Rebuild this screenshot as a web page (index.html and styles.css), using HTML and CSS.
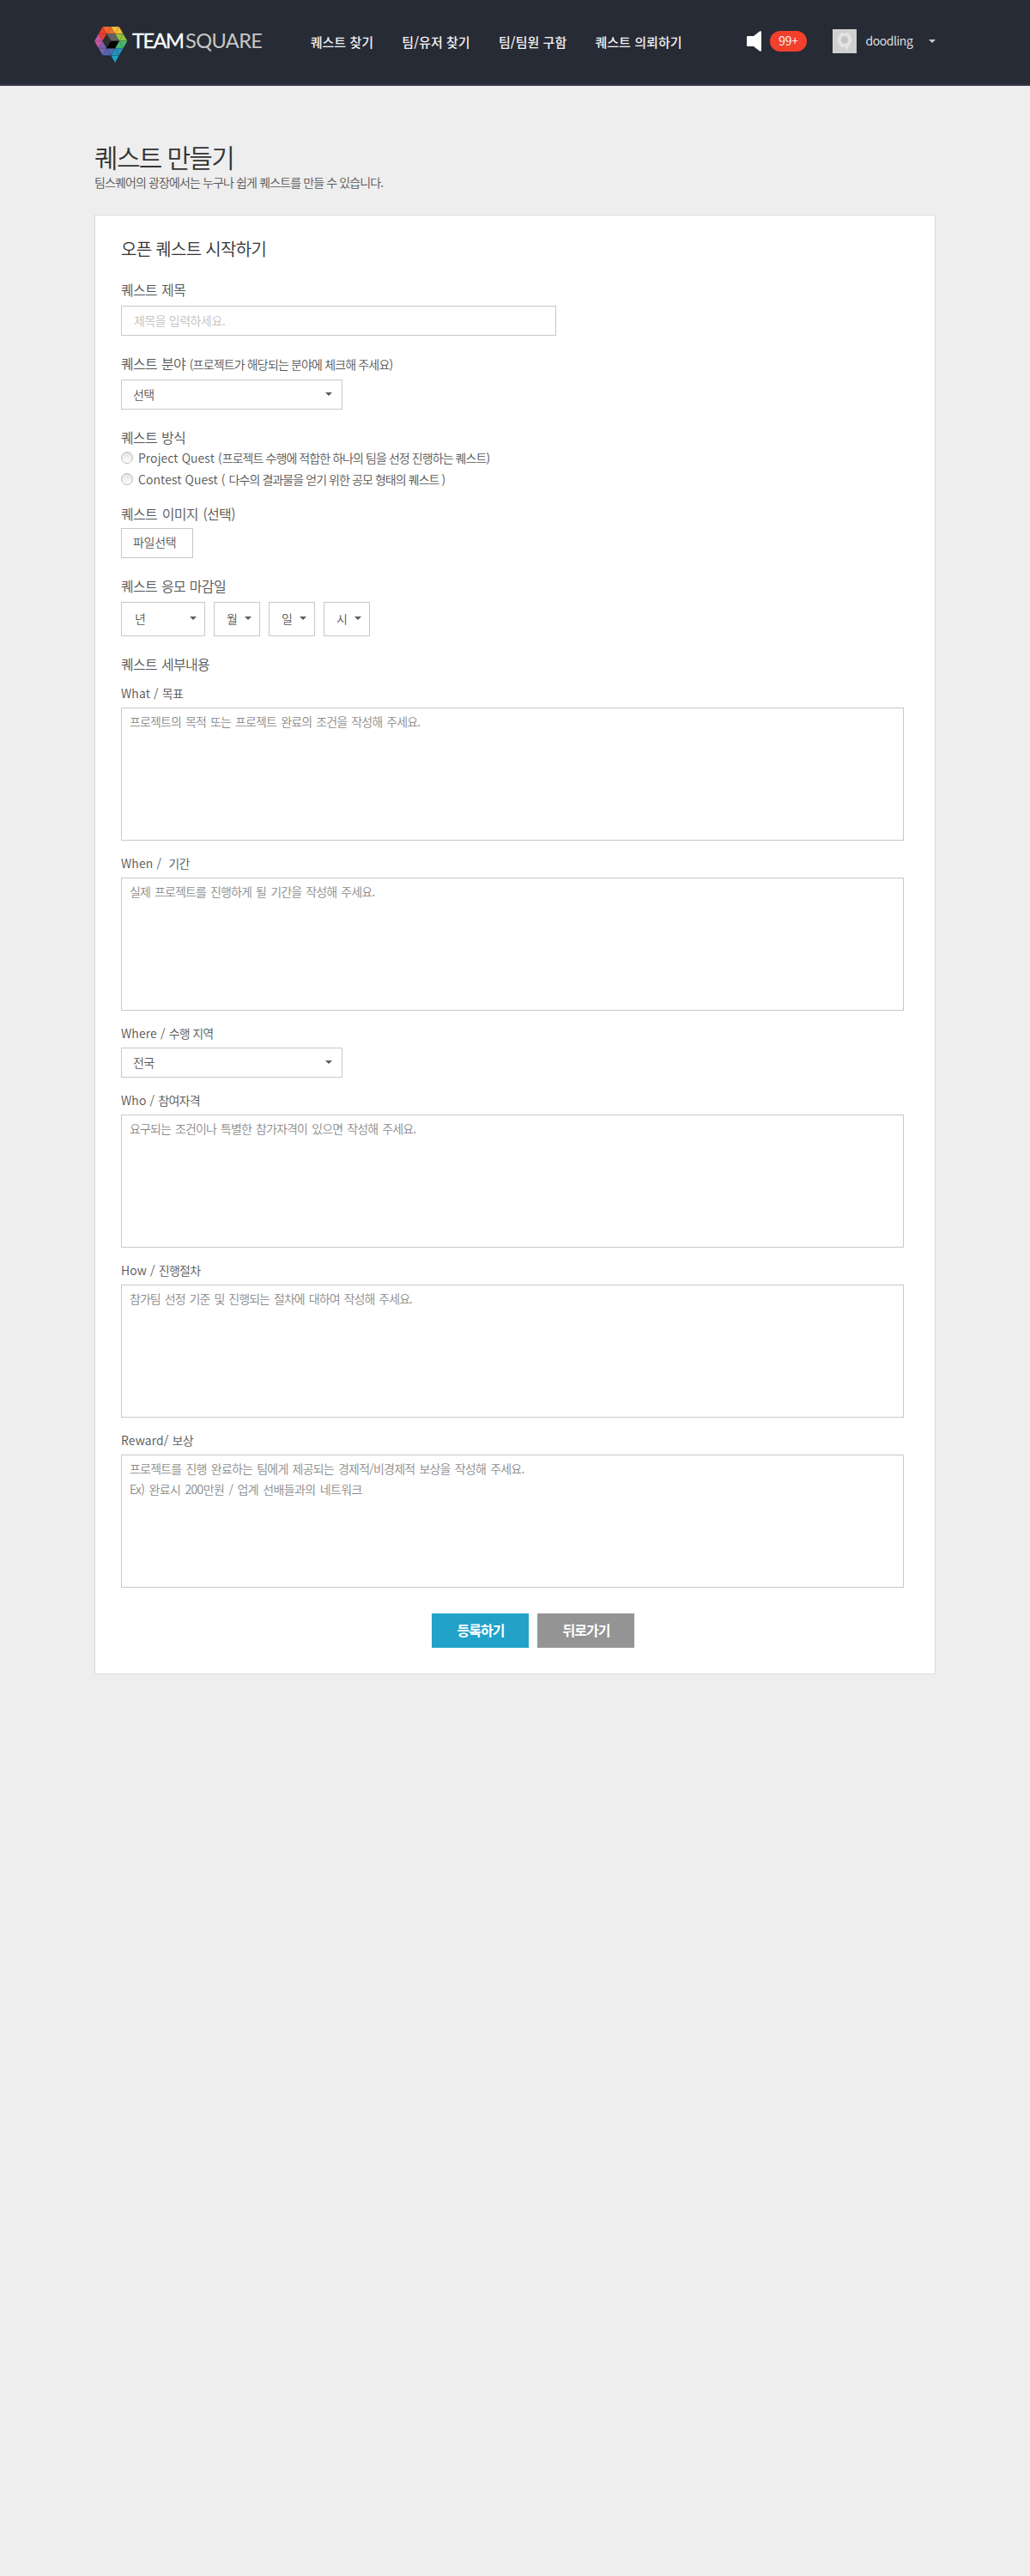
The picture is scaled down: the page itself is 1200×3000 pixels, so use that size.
FILE: index.html
```html
<!DOCTYPE html>
<html lang="ko">
<head>
<meta charset="utf-8">
<title>퀘스트 만들기 - TEAMSQUARE</title>
<link rel="stylesheet" href="styles.css">
</head>
<body>
<header class="header">
  <div class="header-inner">
    <a class="logo">
      <svg class="logo-mark" viewBox="0 0 8 5" preserveAspectRatio="none">
        <g stroke="#272b35" stroke-opacity=".35" stroke-width=".06">
          <path fill="#ee3e2d" d="M2 0L1 1H3zM1 1H3L2 2z"/>
          <path fill="#f36a2c" d="M2 0H4L3 1zM4 0L3 1H5z"/>
          <path fill="#f7bd37" d="M4 0H6L5 1zM6 0L5 1H7z"/>
          <path fill="#8fc441" d="M5 1H7L6 2zM7 1L6 2H8z"/>
          <path fill="#45b972" d="M6 2L5 3H7zM6 2H8L7 3z"/>
          <path fill="#2592bd" d="M5 3H7L6 4zM5 3L4 4H6z"/>
          <path fill="#1ca3cc" d="M4 4H6L5 5z"/>
          <path fill="#5268b0" d="M3 3L2 4H4zM3 3H5L4 4z"/>
          <path fill="#7663ae" d="M2 2L1 3H3zM1 3H3L2 4z"/>
          <path fill="#c757a3" d="M1 1L0 2H2zM0 2H2L1 3z"/>
        </g>
        <path fill="#606163" d="M3 1H5L6 2H4z"/>
        <path fill="#2e2e2f" d="M3 1L4 2L3 3L2 2z"/>
        <path fill="#030404" d="M4 2H6L5 3H3z"/>
      </svg>
      <svg class="logo-text" width="154" height="30">
        <text x="0" y="23.4" textLength="61" class="logo-team">TEAM</text>
        <text x="62" y="23.4" textLength="90" class="logo-square">SQUARE</text>
      </svg>
    </a>
    <nav class="nav">
      <a>퀘스트 찾기</a>
      <a>팀/유저 찾기</a>
      <a>팀/팀원 구함</a>
      <a>퀘스트 의뢰하기</a>
    </nav>
    <div class="user">
      <svg class="speaker" width="17" height="24" viewBox="0 0 17 24"><path fill="#fff" d="M1 6H8L15 .5Q17-.5 17 1.500V22.500Q17 24.500 15 23.500L8 18H1Q0 18 0 17V7Q0 6 1 6z"/></svg>
      <span class="badge">99+</span>
      <svg class="avatar" width="28" height="28" viewBox="0 0 28 28">
        <rect width="28" height="28" fill="#d0d0d0"/>
        <path fill="#e6e6e6" fill-rule="evenodd" d="M9.500 4.500H18.500L23 12.500L18.500 20.500L16.500 24.500L14 20.500H9.500L5 12.500zM11.500 8.500L9.500 12.500L11.500 16.500H16.500L18.500 12.500L16.500 8.500z"/>
        <path fill="#c4c4c4" d="M11.500 8.500H16.500L18.500 12.500L16.500 16.500H11.500L9.500 12.500z"/>
        <path fill="none" stroke="#d0d0d0" stroke-width=".5" d="M7.200 8.500H20.800M7.200 16.500H20.800M5 12.500H9.500M18.500 12.500H23M14 4.500L11.500 8.500M14 4.500L16.500 8.500M14 20.500L11.500 16.500M14 20.500L16.500 16.500"/>
      </svg>
      <span class="username">doodling</span>
      <i class="caret caret-light"></i>
    </div>
  </div>
</header>

<main class="page">
  <h1 class="page-title">퀘스트 만들기</h1>
  <p class="page-desc">팀스퀘어의 광장에서는 누구나 쉽게 퀘스트를 만들 수 있습니다.</p>

  <form class="card">
    <h2 class="card-title">오픈 퀘스트 시작하기</h2>

    <section class="group">
      <div class="label">퀘스트 제목</div>
      <input class="input" type="text" placeholder="제목을 입력하세요.">
    </section>

    <section class="group">
      <div class="label">퀘스트 분야 <span class="hint">(프로젝트가 해당되는 분야에 체크해 주세요)</span></div>
      <div class="select"><span>선택</span><i class="caret"></i></div>
    </section>

    <section class="group group-radios">
      <div class="label">퀘스트 방식</div>
      <div class="radio"><i class="dot"></i><span>Project Quest (<span class="ko">프로젝트 수행에 적합한 하나의 팀을 선정 진행하는 퀘스트)</span></span></div>
      <div class="radio"><i class="dot"></i><span>Contest Quest ( <span class="ko">다수의 결과물을 얻기 위한 공모 형태의 퀘스트 )</span></span></div>
    </section>

    <section class="group group-file">
      <div class="label">퀘스트 이미지 (선택)</div>
      <div class="file">파일선택</div>
    </section>

    <section class="group">
      <div class="label">퀘스트 응모 마감일</div>
      <div class="dates">
        <div class="select select-year"><span>년</span><i class="caret"></i></div>
        <div class="select select-short"><span>월</span><i class="caret"></i></div>
        <div class="select select-short"><span>일</span><i class="caret"></i></div>
        <div class="select select-short"><span>시</span><i class="caret"></i></div>
      </div>
    </section>

    <div class="label label-section">퀘스트 세부내용</div>

    <section class="detail">
      <div class="sublabel">What / <span class="ko">목표</span></div>
      <div class="textarea"><p>프로젝트의 목적 또는 프로젝트 완료의 조건을 작성해 주세요.</p></div>
    </section>
    <section class="detail">
      <div class="sublabel">When /&nbsp; <span class="ko">기간</span></div>
      <div class="textarea"><p>실제 프로젝트를 진행하게 될 기간을 작성해 주세요.</p></div>
    </section>
    <section class="detail">
      <div class="sublabel">Where / <span class="ko">수행 지역</span></div>
      <div class="select"><span>전국</span><i class="caret"></i></div>
    </section>
    <section class="detail">
      <div class="sublabel">Who / <span class="ko">참여자격</span></div>
      <div class="textarea"><p>요구되는 조건이나 특별한 참가자격이 있으면 작성해 주세요.</p></div>
    </section>
    <section class="detail">
      <div class="sublabel">How / <span class="ko">진행절차</span></div>
      <div class="textarea"><p class="tight">참가팀 선정 기준 및 진행되는 절차에 대하여 작성해 주세요.</p></div>
    </section>
    <section class="detail">
      <div class="sublabel">Reward/ <span class="ko">보상</span></div>
      <div class="textarea">
        <p class="loose">프로젝트를 진행 완료하는 팀에게 제공되는 경제적/비경제적 보상을 작성해 주세요.</p>
        <p class="example">Ex) 완료시 200만원 / 업계 선배들과의 네트워크</p>
      </div>
    </section>

    <div class="actions">
      <button type="button" class="btn btn-primary">등록하기</button>
      <button type="button" class="btn btn-muted">뒤로가기</button>
    </div>
  </form>
</main>
</body>
</html>
```
FILE: styles.css
```css
* { box-sizing: border-box; }
body, h1, h2, p { margin: 0; }
body {
  min-height: 3000px;
  background: #eee;
  color: #555;
  font: 350 14px/24px "Noto Sans CJK KR", sans-serif;
}

/* header */
.header {
  height: 100px;
  background: #272b35;
  border-bottom: 2px solid #3a3845;
}
.header-inner {
  display: flex;
  width: 980px;
  margin: 0 auto;
}
.logo { display: flex; width: 252px; padding-top: 31px; }
.logo-mark { width: 38.4px; height: 42px; overflow: visible; }
.logo-text { margin: 2px 0 0 6px; font-family: Lato, sans-serif; font-size: 23.6px; }
.logo-team { fill: #fff; font-weight: 400; stroke: #fff; stroke-width: .3px; }
.logo-square { fill: #c6c6c6; font-weight: 400; }
.nav {
  display: flex;
  gap: 33.2px;
  width: 509px;
  padding-top: 37px;
  color: #f2f2f2;
  font-size: 15px;
  font-weight: 500;
  letter-spacing: .04px;
  white-space: nowrap;
}
.user { display: flex; align-items: center; height: 96px; }
.badge {
  width: 43px;
  height: 24px;
  margin: 0 30px 0 10px;
  border-radius: 12px;
  background: #f1412c;
  color: #fff;
  text-align: center;
  line-height: 23px;
  letter-spacing: -.2px;
}
.username {
  width: 73.5px;
  margin-left: 10.5px;
  color: #e8e8e8;
  letter-spacing: -.4px;
  line-height: 22px;
  padding-bottom: 2px;
}

.caret {
  width: 0;
  height: 0;
  border: solid transparent;
  border-width: 4px 4px 0;
  border-top-color: #5a5a5a;
}
.caret-light { border-top-color: #ccc; }

/* page heading */
.page { width: 980px; margin: 0 auto; padding-top: 62px; }
.page-title {
  color: #333;
  font-size: 30px;
  font-weight: 350;
  line-height: 40px;
  letter-spacing: -1.7px;
}
.page-desc { line-height: 20px; letter-spacing: -.88px; margin-bottom: 28px; }

/* form card */
.card {
  padding: 24px 30px 30px;
  background: #fff;
  border: 1px solid #dcdcdc;
}
.card-title {
  margin-bottom: 20px;
  color: #333;
  font-size: 20px;
  font-weight: 350;
  line-height: 30px;
  letter-spacing: -.7px;
}
.group { margin-bottom: 20px; }
.group-radios { margin-bottom: 15px; }
.label {
  margin-bottom: 7px;
  font-size: 16px;
  letter-spacing: -.68px;
  word-spacing: 1px;
}
.group-radios .label { margin-bottom: 0; }
.group-file .label { margin-bottom: 5px; word-spacing: 1.8px; }
.label-section { margin-bottom: 10px; }
.hint { font-size: 14px; line-height: 1; letter-spacing: -.85px; word-spacing: 0; }
.ko { letter-spacing: -.75px; }
.radio .ko { letter-spacing: -.93px; }

.input {
  display: block;
  width: 507px;
  height: 35px;
  padding: 0 14px 1px;
  border: 1px solid #c8c8c8;
  background: #fff;
  font: inherit;
  letter-spacing: -.45px;
}
.input::placeholder { color: #bfbfbf; opacity: 1; }

.select {
  display: flex;
  align-items: center;
  justify-content: space-between;
  width: 258px;
  height: 35px;
  padding: 0 11px 2px 13px;
  border: 1px solid #c8c8c8;
  letter-spacing: -.6px;
}
.dates { display: flex; gap: 10px; }
.select-year { width: 98px; height: 40px; padding: 0 9px 2px 15px; }
.select-short { width: 54px; height: 40px; padding: 0 9px 2px 14px; }

.radio {
  display: flex;
  align-items: center;
  gap: 6px;
  height: 25px;
  padding-bottom: 1px;
  letter-spacing: .1px;
}
.dot {
  width: 14px;
  height: 14px;
  border: 1px solid #bbb;
  border-radius: 50%;
  background: linear-gradient(#e2e2e2, #fff);
}
.file {
  width: 84px;
  height: 35px;
  padding-left: 13px;
  border: 1px solid #c8c8c8;
  line-height: 31px;
  letter-spacing: -.3px;
}

.detail { margin-bottom: 14px; }
.sublabel { margin-bottom: 5px; letter-spacing: .15px; }
.textarea {
  width: 912px;
  height: 155px;
  padding: 3px 9px;
  border: 1px solid #c8c8c8;
  color: #8a8a8a;
  letter-spacing: -.88px;
  word-spacing: 2px;
}
.tight { letter-spacing: -.95px; }
.loose { letter-spacing: -.8px; }
.example { letter-spacing: -.64px; }

.actions {
  display: flex;
  gap: 10px;
  padding: 16px 0 0 362px;
}
.btn {
  width: 113px;
  height: 40px;
  padding: 0 0 2px 1px;
  border: 0;
  color: #fff;
  font: 700 16px "Noto Sans CJK KR", sans-serif;
  letter-spacing: -1px;
}
.btn-primary { background: #23a2c9; }
.btn-muted { background: #949494; }
```
